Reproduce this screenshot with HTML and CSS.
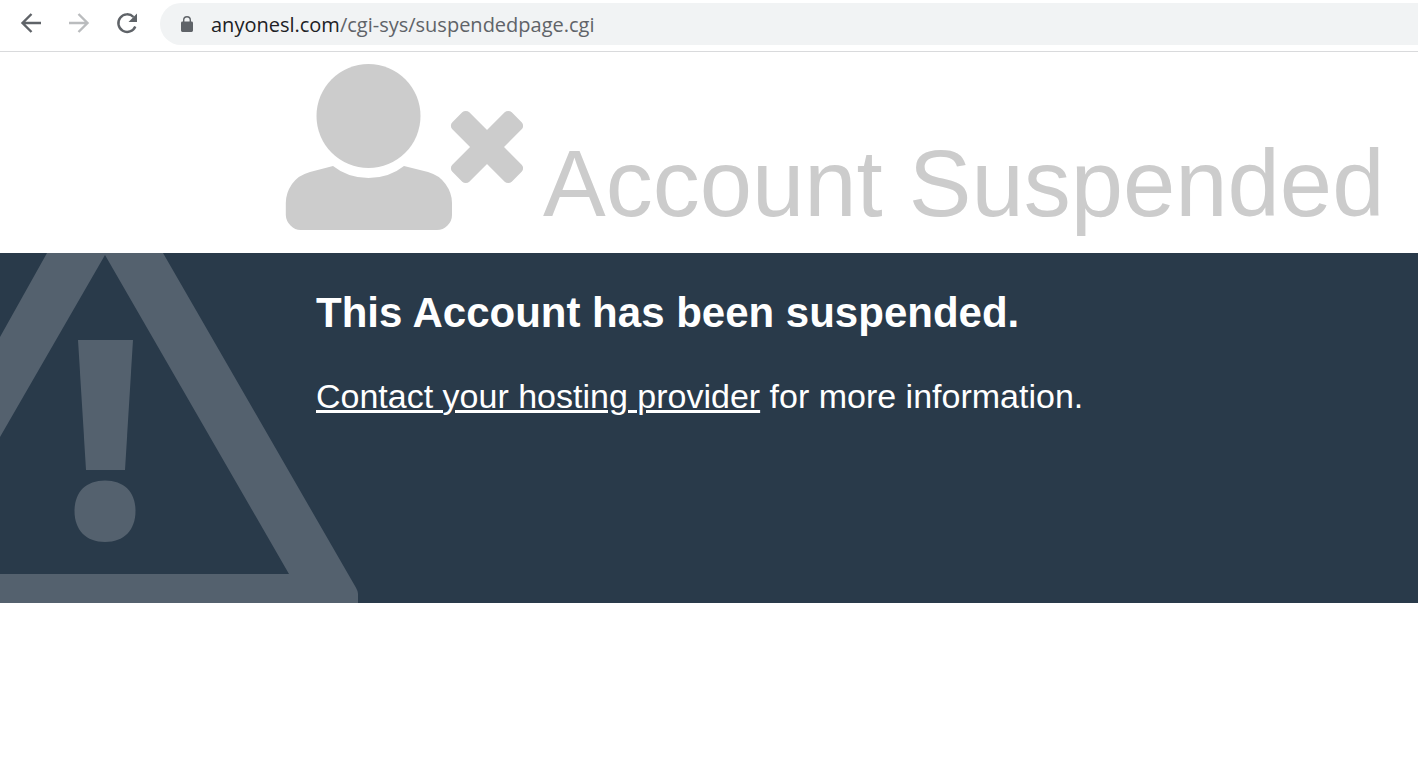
FILE: index.html
```html
<!DOCTYPE html>
<html lang="en">
<head>
<meta charset="utf-8">
<title>Account Suspended</title>
<link rel="stylesheet" href="styles.css">
</head>
<body>
<div class="toolbar">
  <nav class="nav" aria-label="Browser">
    <button class="nav-button" type="button" aria-label="Back">
      <svg class="nav-icon" viewBox="0 0 24 24"><path d="M22 12H3.500M12.500 3l-9 9 9 9"/></svg>
    </button>
    <button class="nav-button" type="button" aria-label="Forward" disabled>
      <svg class="nav-icon" viewBox="0 0 24 24"><path d="M2 12h18.500M11.500 3l9 9-9 9"/></svg>
    </button>
    <button class="nav-button" type="button" aria-label="Reload">
      <svg class="nav-icon" viewBox="0 0 24 24"><path d="M20.300 15.500A8.800 8.800 0 1 1 18.500 6"/><path class="solid" d="M22 2.500v8.500h-8.500z"/></svg>
    </button>
  </nav>
  <div class="address">
    <svg class="lock" viewBox="0 0 12 18" aria-hidden="true"><path fill="#5f6368" fill-rule="evenodd" d="M2 6.500V5a4 4 0 0 1 8 0v1.500h.6A1.400 1.400 0 0 1 12 7.900v7.700A1.400 1.400 0 0 1 10.600 17H1.400A1.400 1.400 0 0 1 0 15.600V7.900A1.400 1.400 0 0 1 1.400 6.500zm1.400 0h5.200V5a2.600 2.600 0 0 0-5.200 0z"/></svg>
    <span class="url"><span class="host">anyonesl.com</span>/cgi-sys/suspendedpage.cgi</span>
  </div>
</div>
<header class="banner">
  <svg class="user-icon" viewBox="0 0 238 168" aria-hidden="true">
    <g fill="#ccc">
      <circle cx="83.500" cy="53" r="52"/>
      <path d="M48 103Q63 115 83.500 115T119 103L143 109Q154 112 160.500 121Q167 130 167 140V152Q167 158 162.500 162.500T152 167H15.500Q10 167 5.500 162.500T.8 152V140Q.8 130 7 121Q13.500 112 25 109Z"/>
    </g>
    <g transform="rotate(45 202 84)" fill="#ccc">
      <rect x="160" y="72" width="84" height="24" rx="5"/>
      <rect x="190" y="42" width="24" height="84" rx="5"/>
    </g>
  </svg>
  <h1 class="title">Account Suspended</h1>
</header>
<main class="notice">
  <svg class="warning" viewBox="0 0 358 350" aria-hidden="true">
    <g fill="#54616e">
      <path fill-rule="evenodd" d="M47 0H163L355 333Q358 338 358 341V350H0V321H289L105 2L0 184V84Z"/>
      <path d="M78 87H133L125 217H86Z"/>
      <path d="M105 227.500C124 227.500 135.500 239 135.500 258S124 289 105 289 74.500 277 74.500 258 86 227.500 105 227.500Z"/>
    </g>
  </svg>
  <div class="message">
    <h2 class="heading">This Account has been suspended.</h2>
    <p class="detail"><a class="link" href="#">Contact your hosting provider</a> for more information.</p>
  </div>
</main>
</body>
</html>
```
FILE: styles.css
```css
* {
  box-sizing: border-box;
}

body {
  margin: 0;
  background: #fff;
  font-family: "Liberation Sans", Arial, sans-serif;
}

.toolbar {
  display: flex;
  align-items: flex-start;
  padding: 3px 0 6px 19px;
  border-bottom: 1px solid #d9dadc;
}

.nav {
  display: flex;
  gap: 24px;
  padding: 8px 21px 0 0;
}

.nav-button {
  width: 24px;
  height: 24px;
  padding: 0;
  border: 0;
  background: none;
  color: #5f6368;
}

.nav-button:disabled {
  color: #babcbe;
}

.nav-icon {
  display: block;
  width: 24px;
  height: 24px;
  fill: none;
  stroke: currentColor;
  stroke-width: 2.4;
}

.solid {
  fill: currentColor;
  stroke: none;
}

.address {
  display: flex;
  flex: 1;
  align-items: center;
  gap: 18px;
  height: 42px;
  padding-left: 21px;
  border-radius: 21px 0 0 21px;
  background: #f1f3f4;
}

.lock {
  width: 12px;
  height: 18px;
}

.url {
  padding-top: 2px;
  font: 20px/28px "Open Sans", sans-serif;
  color: #5f6368;
  white-space: nowrap;
}

.host {
  color: #202124;
}

.banner {
  display: flex;
  align-items: flex-start;
  gap: 20px;
  padding: 11px 0 21px 285px;
}

.user-icon {
  flex: none;
  width: 238px;
  height: 168px;
}

.title {
  margin: 0;
  padding-top: 73px;
  color: #ccc;
  font-size: 94px;
  font-weight: 400;
  line-height: 96px;
  white-space: nowrap;
}

.notice {
  position: relative;
  min-height: 350px;
  padding: 36px 0 0 316px;
  background: #293a4a;
  color: #fff;
}

.warning {
  position: absolute;
  top: 0;
  left: 0;
  width: 358px;
  height: 350px;
}

.message {
  position: relative;
}

.heading {
  margin: 0 0 35px;
  font-size: 42px;
  line-height: 48px;
}

.detail {
  margin: 0;
  font-size: 34px;
  line-height: 48px;
}

.link {
  color: #fff;
  text-decoration-thickness: 3px;
}
```
